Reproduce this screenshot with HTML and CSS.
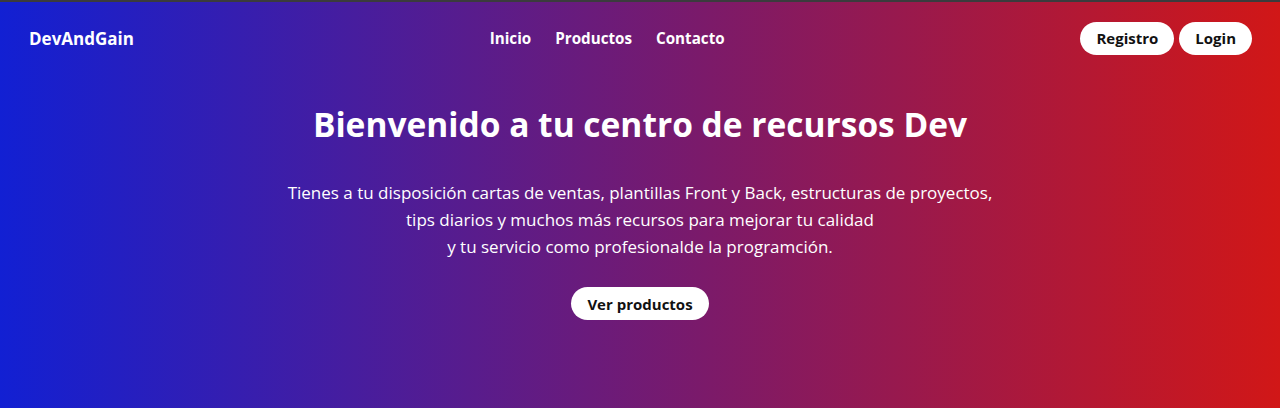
FILE: index.html
```html
<!DOCTYPE html>
<html lang="es">
<head>
<meta charset="utf-8">
<title>DevAndGain</title>
<link rel="stylesheet" href="styles.css">
</head>
<body>
<div class="topbar"></div>
<div class="hero">
  <header class="header">
    <a class="logo" href="#">DevAndGain</a>
    <nav class="nav">
      <a href="#">Inicio</a>
      <a href="#">Productos</a>
      <a href="#">Contacto</a>
    </nav>
    <div class="auth">
      <a class="pill" href="#">Registro</a>
      <a class="pill" href="#">Login</a>
    </div>
  </header>
  <main class="intro">
    <h1 class="title">Bienvenido a tu centro de recursos Dev</h1>
    <p class="lead">Tienes a tu disposición cartas de ventas, plantillas Front y Back, estructuras de proyectos,<br>tips diarios y muchos más recursos para mejorar tu calidad<br>y tu servicio como profesionalde la programción.</p>
    <a class="pill cta" href="#">Ver productos</a>
  </main>
</div>
</body>
</html>
```
FILE: styles.css
```css
* { box-sizing: border-box; }
html, body { margin: 0; height: 100%; }
body {
  font-family: "Open Sans", "Noto Sans", sans-serif;
  background: #111;
  display: flex;
  flex-direction: column;
}
.topbar { height: 2px; background: #3b3b3d; }
.hero {
  flex: 1;
  background: linear-gradient(to right, #1220d3, #7b1a6a 55%, #d11717);
  color: #fff;
}
.header {
  display: flex;
  align-items: center;
  justify-content: space-between;
  padding: 10px 28px 0 29px;
  height: 62px;
}
.logo { color: #fff; text-decoration: none; font-weight: 700; font-size: 17px; }
.nav a { color: #fff; text-decoration: none; font-weight: 700; font-size: 15.2px; }
.nav { display: flex; gap: 24px; }
.auth { display: flex; gap: 5px; }
.pill {
  display: inline-flex;
  align-items: center;
  justify-content: center;
  background: #fff;
  color: #111;
  text-decoration: none;
  font-weight: 700;
  font-size: 15px;
  height: 33px;
  padding: 0 16px;
  border-radius: 17px;
}
.intro { text-align: center; padding-top: 35px; display: flex; flex-direction: column; align-items: center; }
.title { margin: 0; font-size: 33.5px; font-weight: 700; line-height: 50px; }
.lead { margin: 30px 0 27px; font-size: 17px; line-height: 27px; }
.cta { padding: 0 16px; }
```
